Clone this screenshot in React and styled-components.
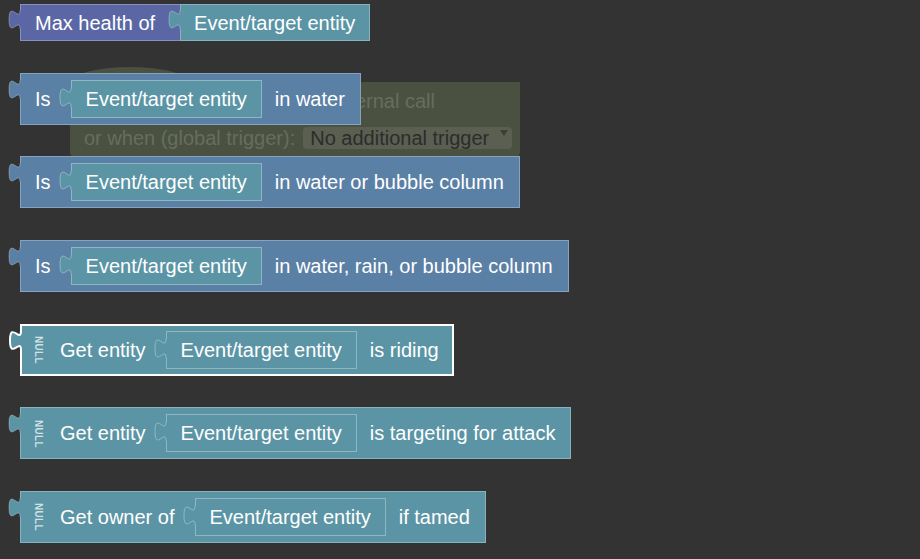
import styled, { createGlobalStyle } from "styled-components";

const PURPLE = "#5b67a5";
const BLUE = "#5b80a5";
const TEAL = "#5b95a5";

const GlobalStyle = createGlobalStyle`
  html, body {
    margin: 0;
    padding: 0;
    background: #333333;
  }
  body {
    font-family: "Liberation Sans", Arial, sans-serif;
  }
`;

const Workspace = styled.div`
  position: relative;
  width: 920px;
  height: 559px;
  overflow: hidden;
  background: #333333;
  box-sizing: border-box;
  padding: 4px 0 0 20px;
  display: flex;
  flex-direction: column;
  align-items: flex-start;
  gap: 31.7px;
`;

const HatBlock = styled.div`
  position: absolute;
  left: 70px;
  top: 82px;
  width: 450px;
  height: 76px;
  background: #4a5141;
  border-radius: 0 0 6px 6px;
  z-index: 0;
  box-sizing: border-box;
  padding: 7px 0 0 14px;
  display: flex;
  flex-direction: column;
  gap: 13px;
  color: #676d5c;
  font-size: 20px;

  &::before {
    content: "";
    position: absolute;
    left: 0;
    top: -15px;
    width: 120px;
    height: 16px;
    background: #4a5141;
    border-radius: 60px 60px 0 0 / 16px 16px 0 0;
  }
`;

const HatLine = styled.div`
  display: flex;
  align-items: center;
  height: 24px;
  white-space: nowrap;
  width: ${(p) => p.$width || "auto"};
  justify-content: ${(p) => (p.$right ? "flex-end" : "flex-start")};
`;

const Dropdown = styled.span`
  position: relative;
  margin-left: 8px;
  height: 22px;
  width: 209px;
  box-sizing: border-box;
  padding-left: 7px;
  border-radius: 4px;
  background: #5a5f51;
  color: #2c2c2c;
  display: flex;
  align-items: center;

  &::after {
    content: "";
    position: absolute;
    right: 4px;
    top: 3px;
    border-left: 4px solid transparent;
    border-right: 4px solid transparent;
    border-top: 6px solid #3b3f34;
  }
`;

const Block = styled.div`
  position: relative;
  z-index: 1;
  display: flex;
  align-items: center;
  height: ${(p) => p.$h || 52}px;
  box-sizing: border-box;
  padding: 0 ${(p) => (p.$flush ? 0 : p.$selected ? 13 : 15)}px 0
    ${(p) => (p.$selected ? 13 : 14)}px;
  background: ${(p) => p.$color};
  border: ${(p) => (p.$selected ? "2px solid #ffffff" : "1px solid rgba(255,255,255,0.28)")};
  color: #ffffff;
  font-size: 20px;
  white-space: nowrap;
`;

const Attached = styled.div`
  position: relative;
  align-self: stretch;
  display: flex;
  align-items: center;
  margin: -1px -1px -1px 25px;
  padding: 0 14px 0 13px;
  background: ${TEAL};
  border: 1px solid rgba(255,255,255,0.28);
`;

const Field = styled.div`
  position: relative;
  display: flex;
  align-items: center;
  height: 38px;
  box-sizing: border-box;
  margin: 0 13px 0 20px;
  padding: 0 14px;
  background: ${TEAL};
  border: 1px solid rgba(255,255,255,0.32);
`;

const Label = styled.span`
  line-height: 1;
`;

const NullTag = styled.span`
  writing-mode: vertical-rl;
  font-size: 10px;
  font-weight: bold;
  letter-spacing: 0.3px;
  color: rgba(255,255,255,0.72);
  margin: 0 17px 0 -2px;
  line-height: 1;
`;

const TabSvg = styled.svg`
  position: absolute;
  left: -13px;
  top: ${(p) => p.$top}px;
  overflow: visible;
`;

function Tab({ color, top = 6, stroke = "rgba(255,255,255,0.28)", width = 1 }) {
  const curve = "M12,0 c0,12.7 -11,-10.2 -11,9.5 s11,-3.2 11,9.5";
  return (
    <TabSvg $top={top} width="15" height="20" viewBox="0 0 15 20">
      <path d={`${curve} L14.5,19 L14.5,0 Z`} fill={color} />
      <path d={curve} fill="none" stroke={stroke} strokeWidth={width} />
    </TabSvg>
  );
}

function EntityField() {
  return (
    <Field>
      <Tab color={TEAL} top={7} stroke="rgba(255,255,255,0.32)" />
      <Label>Event/target entity</Label>
    </Field>
  );
}

function EntityBlock({ color, prefix, suffix, isNull, selected }) {
  return (
    <Block $color={color} $selected={selected}>
      <Tab
        color={color}
        top={selected ? 5 : 6}
        stroke={selected ? "#ffffff" : undefined}
        width={selected ? 2 : 1}
      />
      {isNull && <NullTag>NULL</NullTag>}
      <Label>{prefix}</Label>
      <EntityField />
      <Label>{suffix}</Label>
    </Block>
  );
}

export default function App() {
  return (
    <>
      <GlobalStyle />
      <Workspace>
        <HatBlock>
          <HatLine $right $width="351px">triggered by external call</HatLine>
          <HatLine>
            or when (global trigger):
            <Dropdown>No additional trigger</Dropdown>
          </HatLine>
        </HatBlock>

        <Block $color={PURPLE} $h={37} $flush>
          <Tab color={PURPLE} top={5} />
          <Label>Max health of</Label>
          <Attached>
            <Tab color={TEAL} top={5} />
            <Label>Event/target entity</Label>
          </Attached>
        </Block>

        <EntityBlock color={BLUE} prefix="Is" suffix="in water" />
        <EntityBlock color={BLUE} prefix="Is" suffix="in water or bubble column" />
        <EntityBlock color={BLUE} prefix="Is" suffix="in water, rain, or bubble column" />
        <EntityBlock color={TEAL} prefix="Get entity" suffix="is riding" isNull selected />
        <EntityBlock color={TEAL} prefix="Get entity" suffix="is targeting for attack" isNull />
        <EntityBlock color={TEAL} prefix="Get owner of" suffix="if tamed" isNull />
      </Workspace>
    </>
  );
}
